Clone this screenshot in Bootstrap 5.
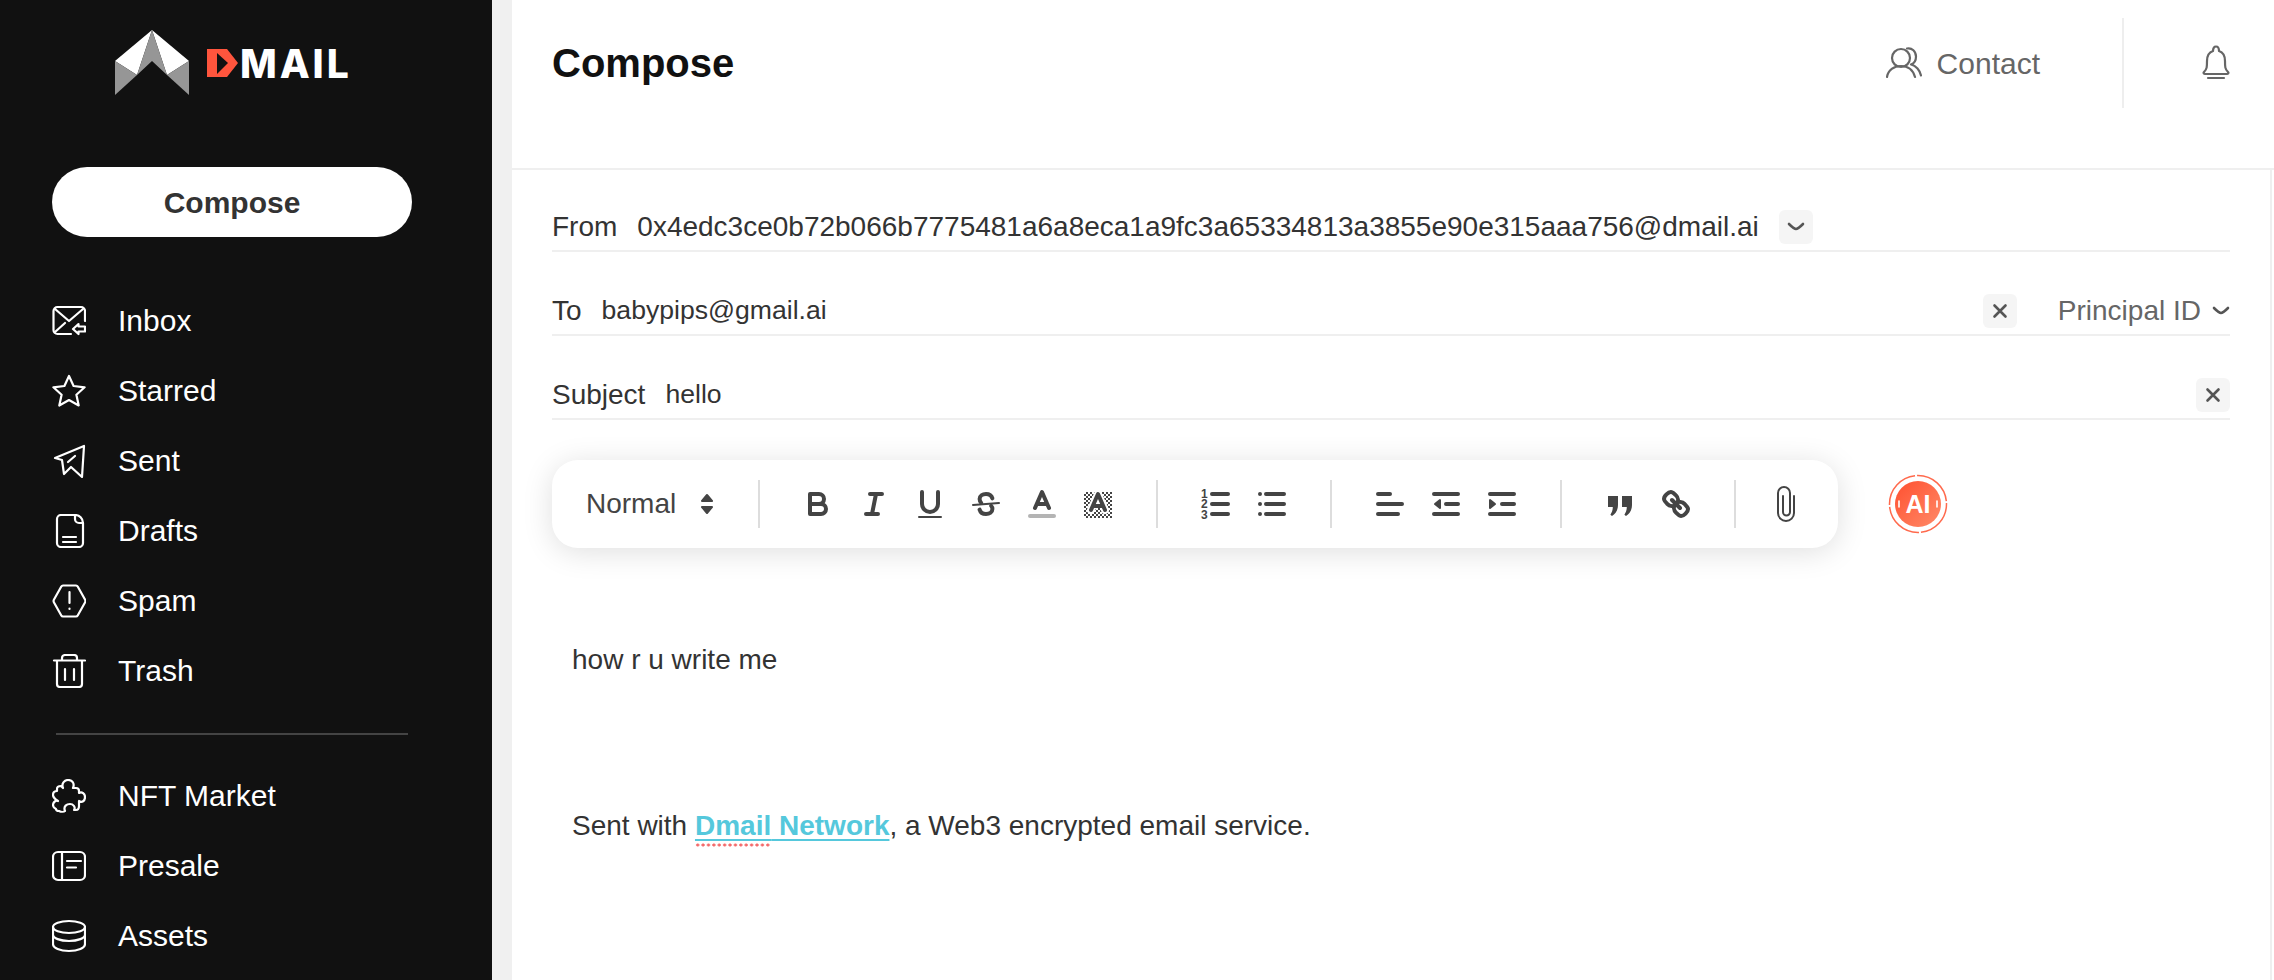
<!DOCTYPE html>
<html lang="en">
  <head>
    <meta charset="utf-8" />
    <meta name="viewport" content="width=device-width, initial-scale=1" />
    <title>Dmail - Compose</title>
    <link href="https://cdn.jsdelivr.net/npm/bootstrap@5.3.0/dist/css/bootstrap.min.css" rel="stylesheet" />
    <style>
      html, body { height: 100%; overflow: hidden; }
      body { font-family: "Liberation Sans", Arial, sans-serif; color: #333; background: #f0f0f0; }

      /* sidebar */
      .side { width: 492px; height: 980px; background: #111; flex: none; padding: 30px 80px 0 52px; }
      .brand { height: 65px; margin-left: 63px; width: 300px; }
      .brand-d { margin: 19px 0 0 18px; }
      .brand-word { font-family: Inter, "Liberation Sans", sans-serif; font-weight: 800; font-size: 39px; line-height: 1; color: #fff; margin: 14px 0 0 1px; letter-spacing: 2.9px; }
      .compose-btn { width: 360px; height: 70px; margin-top: 72px; border-radius: 35px; background: #fff; color: #333; font-weight: 700; font-size: 30px; border: 0; padding: 0; }
      .menu-item { height: 70px; padding: 0; gap: 32px; color: #fff; font-size: 30px; }
      .menu-item:hover { color: #fff; }
      .menu-item span { margin-top: -2px; }
      .menu-item svg { flex: none; fill: none; stroke: #fff; stroke-width: 2.2; stroke-linecap: round; stroke-linejoin: round; }
      .side-menu { margin-top: 49px; }
      .side-rule { width: 352px; height: 2px; background: #444; margin: 27px 0 26px 4px; }

      /* main panel */
      .work { padding-left: 20px; min-width: 0; }
      .panel { background: #fff; height: 980px; }
      .top-bar { height: 170px; border-bottom: 2px solid #efefef; padding: 18px 44px 0 40px; align-items: flex-start; }
      .page-title { font-size: 40px; font-weight: 700; color: #111; margin: 0; line-height: 90px; height: 90px; }
      .contact { color: #666; font-size: 30px; gap: 15px; height: 90px; margin-right: 82px; }
      .top-bar svg { fill: none; stroke: #666; stroke-width: 2.2; stroke-linecap: round; stroke-linejoin: round; flex: none; }
      .top-rule { width: 2px; height: 90px; background: #eee; margin-right: 78px; }
      .bell-box { height: 90px; }

      .form-area { border-right: 2px solid #efefef; height: 810px; padding: 40px 40px 0 40px; margin-right: 2px; }
      .field { height: 42px; font-size: 28px; color: #333; border-bottom: 2px solid #efefef; margin-bottom: 42px; align-items: flex-start; }
      .field-label { margin-right: 20px; line-height: 33px; }
      .field-value { line-height: 33px; }
      .field-short { font-size: 26.6px; }
      .chip { width: 34px; height: 34px; background: #f5f5f5; border-radius: 6px; flex: none; }
      .chip-after { margin-left: 20px; }
      .chip svg, .chev { fill: none; stroke: #555; stroke-width: 2.6; stroke-linecap: round; stroke-linejoin: round; }
      .principal { color: #666; line-height: 33px; gap: 11px; margin-left: 41px; }

      /* toolbar */
      .tool-row { margin-top: -2px; gap: 50px; }
      .tool-bar { width: 1286px; height: 88px; background: #fff; border-radius: 26px; box-shadow: 0 4px 30px rgba(0, 0, 0, .13); padding-left: 34px; }
      .tool-sep { width: 2px; height: 48px; background: #ddd; margin: 0 30px; flex: none; }
      .tool-btn { width: 56px; height: 36px; flex: none; }
      .tool-btn svg { fill: none; stroke: #444; stroke-width: 2; stroke-linecap: round; stroke-linejoin: round; display: block; margin: 0 auto; }
      .tool-btn svg .solid { fill: #444; stroke: none; }
      .tool-btn svg .tri { fill: #444; stroke-width: 1; }
      .tool-btn svg text { fill: #444; stroke: none; font-size: 6px; font-weight: 700; font-family: "Liberation Sans", sans-serif; }
      .size-pick { width: 142px; color: #444; font-size: 28px; flex: none; justify-content: space-between; padding-right: 14px; }
      .size-arrows { fill: #444; stroke: #444; stroke-width: 2; stroke-linejoin: round; }
      .clip-btn { width: 40px; }
      .ai-badge { width: 60px; height: 60px; flex: none; }
      .ai-word { font-family: "Liberation Sans", sans-serif; font-weight: 700; font-size: 25px; fill: #fff; }

      .mail-body { padding-left: 20px; font-size: 28px; color: #333; line-height: 36px; }
      .mail-first { margin: 94px 0 0; }
      .mail-sign { margin: 130px 0 0; }
      .mail-link { color: #55c8dc; font-weight: 700; text-decoration: underline; text-underline-offset: 4px; text-decoration-thickness: 2px; }
      .mail-link:hover { color: #55c8dc; }
      .spell { background: radial-gradient(circle, #f46a6a 1.3px, transparent 1.8px) left bottom / 5.4px 4px repeat-x; padding-bottom: 6px; }
    </style>
  </head>
  <body>
    <div class="d-flex">
      <!-- Sidebar -->
      <aside class="side">
        <div class="brand d-flex align-items-start">
          <svg width="74" height="65" viewBox="0 0 74 65">
            <polygon fill="#fff" points="37,0 0,31 22,45" />
            <polygon fill="#fff" points="37,0 74,31 52,45" />
            <polygon fill="#969696" points="37,0 22,45 37,31 52,45" />
            <polygon fill="#969696" points="0,31 22,45 0,65" />
            <polygon fill="#969696" points="74,31 52,45 74,65" />
          </svg>
          <svg class="brand-d" role="img" aria-label="D" width="32" height="28" viewBox="0 0 32 28">
            <polygon fill="#ff553d" points="0,0 20,0 31,14 20,28 0,28" />
            <polygon fill="#111" points="10,4 21,14 10,25" />
          </svg>
          <span class="brand-word">MAIL</span>
        </div>
        <button type="button" class="btn compose-btn">Compose</button>

        <nav class="nav flex-column side-menu">
          <a class="nav-link d-flex align-items-center menu-item" href="#">
            <svg width="34" height="34" viewBox="0 0 34 34"><path d="M33 17V7a4 4 0 0 0-4-4H5.500a4 4 0 0 0-4 4v19a4 4 0 0 0 4 4H19" /><path d="M3 5l14 12L31 5" /><path d="M3 28l10-9" /><path d="M33 22.500h-6.500V20L21 25l5.500 5v-2.500H33z" /></svg>
            <span>Inbox</span>
          </a>
          <a class="nav-link d-flex align-items-center menu-item" href="#">
            <svg width="34" height="34" viewBox="0 0 34 34"><path d="M17 2l4.600 10 11 1.300-8.200 7.400 2.300 10.800L17 26l-9.700 5.500 2.300-10.800-8.200-7.400 11-1.300z" /></svg>
            <span>Starred</span>
          </a>
          <a class="nav-link d-flex align-items-center menu-item" href="#">
            <svg width="34" height="34" viewBox="0 0 34 34"><path d="M3 14L32 2l-2 31-11-10-7 7-2-14z" /><path d="M16 18l7-6" /></svg>
            <span>Sent</span>
          </a>
          <a class="nav-link d-flex align-items-center menu-item" href="#">
            <svg width="34" height="34" viewBox="0 0 34 34"><path d="M23 1H9a4 4 0 0 0-4 4v24a4 4 0 0 0 4 4h18a4 4 0 0 0 4-4V9" /><path d="M23 1v4a4 4 0 0 0 4 4h4a8 8 0 0 0-8-8z" /><path d="M11 23h13M11 28h13" /></svg>
            <span>Drafts</span>
          </a>
          <a class="nav-link d-flex align-items-center menu-item" href="#">
            <svg width="34" height="34" viewBox="0 0 34 34"><path d="M11 1.500h13a2 2 0 0 1 1.700 1L33 15.500a3 3 0 0 1 0 3L25.700 31.500a2 2 0 0 1-1.700 1H11a2 2 0 0 1-1.700-1L2 18.500a3 3 0 0 1 0-3L9.300 2.500a2 2 0 0 1 1.700-1z" /><path d="M17.500 8v11M17.500 24.500v.5" /></svg>
            <span>Spam</span>
          </a>
          <a class="nav-link d-flex align-items-center menu-item" href="#">
            <svg width="34" height="34" viewBox="0 0 34 34"><path d="M2 6.500h31" /><path d="M10 6V4a3 3 0 0 1 3-3h9a3 3 0 0 1 3 3v2" /><path d="M5 7v23a3 3 0 0 0 3 3h19a3 3 0 0 0 3-3V7" /><path d="M13 15v11M22 15v11" /></svg>
            <span>Trash</span>
          </a>
        </nav>

        <div class="side-rule"></div>

        <nav class="nav flex-column">
          <a class="nav-link d-flex align-items-center menu-item" href="#">
            <svg width="34" height="34" viewBox="0 0 34 34"><path d="M11 9C9 4 13 1 16 1c4 0 7 3 5 8h3c2 0 3 1 3 3v2c3-2 6 1 6 4 0 4-3 6-6 4v5c0 2-1 4-3 4h-2c2-3-1-6-4-6s-7 2-5 7c-1 1-4 1-6 0-2 0-3-1-3-2-2-1-3-2-3-4 0-3 3-5 5-4-3-2-5-4-5-6 0-3 2-4 4-4v-2c0-2 2-3 4-3z" /></svg>
            <span>NFT Market</span>
          </a>
          <a class="nav-link d-flex align-items-center menu-item" href="#">
            <svg width="34" height="34" viewBox="0 0 34 34"><rect x="1" y="3" width="32" height="28" rx="5" /><path d="M10 3v28M15 12h14M15 18.500h9" /></svg>
            <span>Presale</span>
          </a>
          <a class="nav-link d-flex align-items-center menu-item" href="#">
            <svg width="34" height="34" viewBox="0 0 34 34"><ellipse cx="17" cy="8" rx="16" ry="6" /><path d="M1 8v8c0 3 7 6 16 6s16-3 16-6V8" /><path d="M1 16v9c0 4 7 7 16 7s16-3 16-7v-9" /></svg>
            <span>Assets</span>
          </a>
        </nav>
      </aside>

      <!-- Main -->
      <main class="work flex-grow-1">
        <div class="panel">
          <header class="top-bar d-flex">
            <h1 class="page-title me-auto">Compose</h1>
            <div class="contact d-flex align-items-center">
              <svg width="36" height="32" viewBox="0 0 36 32"><circle cx="15" cy="11" r="9" /><path d="M1 30c1-7 7-11 14-11s12 4 14 11" /><path d="M21 1.500c5-1 9 3 9 8 0 4-2 7-5 8 5 1 9 6 10 11" /></svg>
              <span>Contact</span>
            </div>
            <div class="top-rule"></div>
            <div class="bell-box d-flex align-items-center">
              <svg width="28" height="36" viewBox="0 0 28 36"><path d="M2 27c3-3 3-5 3-11 0-6 3-9 6-10 0-6 6-6 6 0 3 1 6 4 6 10 0 6 0 8 3 11 1 1 0 2-1 2H3c-1 0-2-1-1-2z" /><path d="M6 33h16" /></svg>
            </div>
          </header>

          <section class="form-area">
            <div class="field d-flex">
              <span class="field-label">From</span>
              <span class="field-value">0x4edc3ce0b72b066b7775481a6a8eca1a9fc3a65334813a3855e90e315aaa756@dmail.ai</span>
              <span class="chip chip-after d-flex align-items-center justify-content-center">
                <svg width="18" height="10" viewBox="0 0 18 10"><path d="M2 2c3 3 5 5 7 5s4-2 7-5" /></svg>
              </span>
            </div>
            <div class="field d-flex">
              <span class="field-label">To</span>
              <span class="field-value field-short me-auto">babypips@gmail.ai</span>
              <span class="chip d-flex align-items-center justify-content-center">
                <svg width="16" height="16" viewBox="0 0 16 16"><path d="M2.500 2.500l11 11M13.500 2.500l-11 11" /></svg>
              </span>
              <span class="principal d-flex align-items-center">Principal ID
                <svg class="chev" width="18" height="10" viewBox="0 0 18 10"><path d="M2 2c3 3 5 5 7 5s4-2 7-5" /></svg>
              </span>
            </div>
            <div class="field d-flex">
              <span class="field-label">Subject</span>
              <span class="field-value field-short me-auto">hello</span>
              <span class="chip d-flex align-items-center justify-content-center">
                <svg width="16" height="16" viewBox="0 0 16 16"><path d="M2.500 2.500l11 11M13.500 2.500l-11 11" /></svg>
              </span>
            </div>

            <div class="tool-row d-flex align-items-center">
              <div class="tool-bar d-flex align-items-center">
                <div class="size-pick d-flex align-items-center">
                  <span>Normal</span>
                  <svg class="size-arrows" width="14" height="22" viewBox="0 0 14 22"><path d="M7 2l5 6H2zM7 20l-5-6h10z" /></svg>
                </div>
                <span class="tool-sep"></span>
                <div class="tool-btn"><svg width="36" height="36" viewBox="0 0 18 18"><path d="M5 4h4.500A2.500 2.500 0 0 1 12 6.500 2.500 2.500 0 0 1 9.500 9H5V4z" /><path d="M5 9h5.500a2.500 2.500 0 0 1 2.500 2.500 2.500 2.500 0 0 1-2.500 2.500H5V9z" /></svg></div>
                <div class="tool-btn"><svg width="36" height="36" viewBox="0 0 18 18"><path d="M7 4h6M5 14h6M8 14l2-10" /></svg></div>
                <div class="tool-btn"><svg width="36" height="36" viewBox="0 0 18 18"><path d="M5 3v6a4 4 0 0 0 4 4 4 4 0 0 0 4-4V3" /><rect class="solid" x="3" y="15" width="12" height="1" rx=".5" /></svg></div>
                <div class="tool-btn"><svg width="36" height="36" viewBox="0 0 18 18"><path stroke-width="1" d="M15.500 8.500l-13 1" /><path d="M12.200 6.200C11.800 4.800 10.600 4 9 4 7.200 4 5.800 5 5.800 6.500c0 .8.300 1.400.8 1.900" /><path d="M5.800 11.800C6.200 13.200 7.400 14 9 14c1.800 0 3.200-1 3.200-2.500 0-.7-.2-1.200-.6-1.600" /></svg></div>
                <div class="tool-btn"><svg width="36" height="36" viewBox="0 0 18 18"><path stroke="#b4b4b4" d="M3 15h12" /><path d="M5.500 11L9 3l3.500 8M11.630 9H6.380" /></svg></div>
                <div class="tool-btn"><svg width="36" height="36" viewBox="0 0 18 18">
                  <defs><pattern id="dots" width="2" height="2" patternUnits="userSpaceOnUse"><rect class="solid" width="1" height="1" /><rect class="solid" x="1" y="1" width="1" height="1" /></pattern></defs>
                  <rect x="2" y="3" width="14" height="13" fill="url(#dots)" stroke="none" />
                  <path stroke="#fff" stroke-width="4" d="M5.500 12L9 4l3.500 8" />
                  <path d="M5.500 12L9 4l3.500 8M11.300 10H6.700" />
                </svg></div>
                <span class="tool-sep"></span>
                <div class="tool-btn"><svg width="36" height="36" viewBox="0 0 18 18"><path d="M7 4h8M7 9h8M7 14h8" /><text x="1.500" y="6">1</text><text x="1.500" y="11.200">2</text><text x="1.500" y="16.400">3</text></svg></div>
                <div class="tool-btn"><svg width="36" height="36" viewBox="0 0 18 18"><path d="M6 4h9M6 9h9M6 14h9M3 4h0M3 9h0M3 14h0" /></svg></div>
                <span class="tool-sep"></span>
                <div class="tool-btn"><svg width="36" height="36" viewBox="0 0 18 18"><path d="M3 4h6M3 9h12M3 14h10" /></svg></div>
                <div class="tool-btn"><svg width="36" height="36" viewBox="0 0 18 18"><path d="M3 4h12M3 14h12M9 9h6" /><path class="tri" d="M6 7v4L3.500 9z" /></svg></div>
                <div class="tool-btn"><svg width="36" height="36" viewBox="0 0 18 18"><path d="M3 4h12M3 14h12M9 9h6" /><path class="tri" d="M3 7v4l2.500-2z" /></svg></div>
                <span class="tool-sep"></span>
                <div class="tool-btn"><svg width="36" height="36" viewBox="0 0 18 18"><path class="solid" d="M3 5h5v4.500C8 12 6.800 14 5 15l-.8-.6C5 13 5.400 12 5.400 10.500H3zM10 5h5v4.500c0 2.500-1.200 4.500-3 5.500l-.8-.6c.8-1.400 1.200-2.400 1.200-3.900H10z" /></svg></div>
                <div class="tool-btn"><svg width="36" height="36" viewBox="0 0 18 18"><path d="M7 7l4 4" /><path d="M8.900 4.577a3.476 3.476 0 0 1 .36 4.679A3.476 3.476 0 0 1 4.577 8.900C3.185 7.500 2.035 6.400 4.217 4.217S7.500 3.185 8.900 4.577z" /><path d="M13.423 9.100a3.476 3.476 0 0 0-4.679-.36 3.476 3.476 0 0 0 .36 4.679c1.392 1.392 2.500 2.542 4.679.36S14.815 10.500 13.423 9.100z" /></svg></div>
                <span class="tool-sep"></span>
                <div class="tool-btn clip-btn"><svg width="22" height="36" viewBox="0 0 22 36"><path d="M8 10v16a3.500 3.500 0 0 0 7 0V7A6 6 0 0 0 3 7v20a8 8 0 0 0 16 0V10" /></svg></div>
              </div>
              <svg class="ai-badge" viewBox="0 0 60 60">
                <defs><linearGradient id="aiFill" x1="0" y1="0" x2="1" y2="1"><stop offset="0" stop-color="#ff5030" /><stop offset="1" stop-color="#ff8a68" /></linearGradient></defs>
                <circle cx="30" cy="30" r="28.500" fill="none" stroke="#ff6a4d" stroke-width="1.500" stroke-dasharray="42.700 2" stroke-dashoffset="1" />
                <circle cx="30" cy="30" r="23" fill="url(#aiFill)" />
                <text class="ai-word" x="30" y="39" text-anchor="middle">AI</text>
                <path stroke="#fff" stroke-width="1.600" stroke-linecap="round" d="M11 27v6M49 27v6" />
              </svg>
            </div>

            <div class="mail-body">
              <p class="mail-first">how r u write me</p>
              <p class="mail-sign">Sent with <a class="mail-link" href="#"><span class="spell">Dmail</span> Network</a>, a Web3 encrypted email service.</p>
            </div>
          </section>
        </div>
      </main>
    </div>
    <script src="https://cdn.jsdelivr.net/npm/bootstrap@5.3.0/dist/js/bootstrap.bundle.min.js"></script>
  </body>
</html>
